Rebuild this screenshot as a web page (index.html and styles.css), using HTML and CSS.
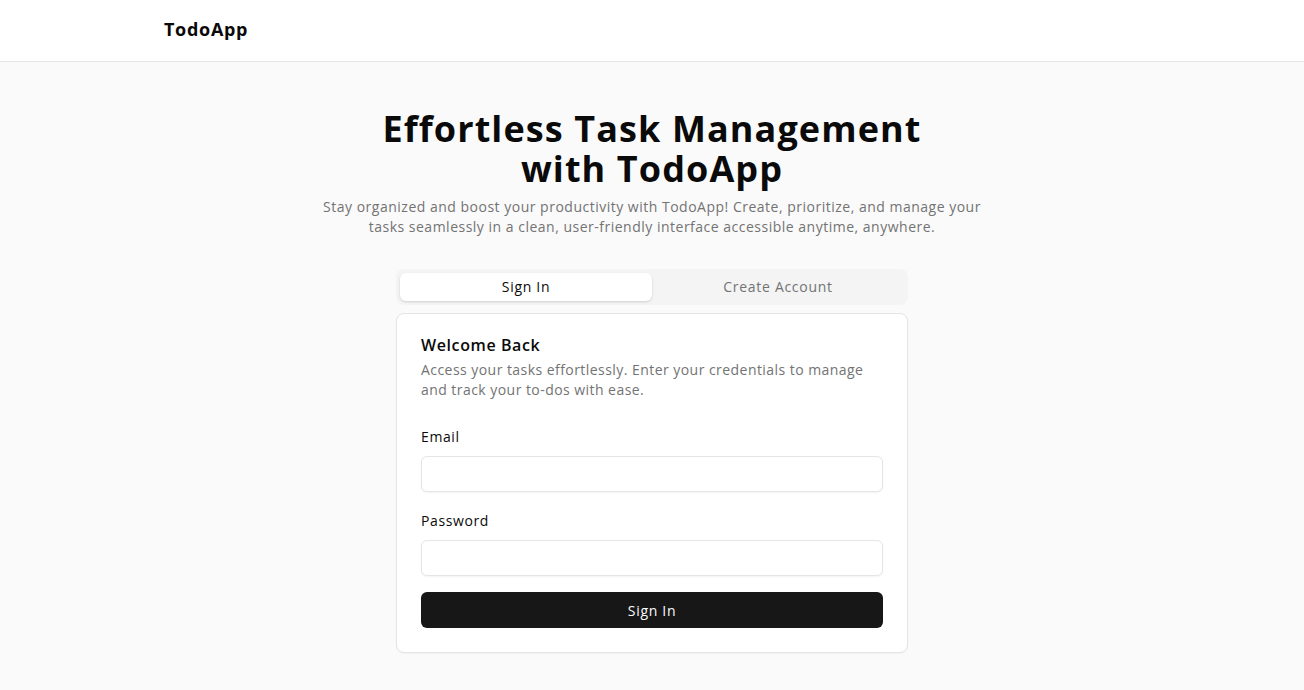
FILE: index.html
```html
<!DOCTYPE html>
<html lang="en">
<head>
<meta charset="utf-8">
<title>TodoApp</title>
<link rel="stylesheet" href="styles.css">
</head>
<body>
<header class="topbar">
  <div class="container">
    <span class="logo">TodoApp</span>
  </div>
</header>
<main class="main">
  <section class="hero">
    <h1 class="hero-title">Effortless Task Management<br>with TodoApp</h1>
    <p class="hero-sub">Stay organized and boost your productivity with TodoApp! Create, prioritize, and manage your tasks seamlessly in a clean, user-friendly interface accessible anytime, anywhere.</p>
  </section>
  <section class="auth">
    <div class="tabs">
      <button class="tab tab-active">Sign In</button>
      <button class="tab">Create Account</button>
    </div>
    <div class="card">
      <h2 class="card-title">Welcome Back</h2>
      <p class="card-desc">Access your tasks effortlessly. Enter your credentials to manage and track your to-dos with ease.</p>
      <form class="form">
        <div class="fields">
          <div class="field">
            <label class="label" for="email">Email</label>
            <input class="input" id="email" type="email">
          </div>
          <div class="field">
            <label class="label" for="password">Password</label>
            <input class="input" id="password" type="password">
          </div>
        </div>
        <button type="button" class="submit">Sign In</button>
      </form>
    </div>
  </section>
</main>
</body>
</html>
```
FILE: styles.css
```css
* { box-sizing: border-box; }
html, body { margin: 0; padding: 0; }
body {
  font-family: "Open Sans", "Liberation Sans", sans-serif;
  background: #fafafa;
  color: #0a0a0a;
  min-height: 100vh;
  letter-spacing: 0.5px;
}
.topbar {
  background: #ffffff;
  border-bottom: 1px solid #e5e5e5;
  height: 62px;
  display: flex;
  align-items: center;
}
.container {
  width: 100%;
  max-width: 1024px;
  margin: 0 auto;
  padding: 0 24px;
}
.logo {
  font-size: 18px;
  font-weight: 700;
  letter-spacing: 0.7px;
  position: relative;
  top: -2px;
}
.main {
  display: flex;
  flex-direction: column;
  align-items: center;
  padding-top: 47px;
}
.hero {
  text-align: center;
  max-width: 672px;
}
.hero-title {
  margin: 0;
  font-size: 36px;
  line-height: 40px;
  font-weight: 700;
  letter-spacing: 1.1px;
}
.hero-sub {
  margin: 8px 0 0;
  font-size: 14px;
  line-height: 20px;
  color: #737373;
  letter-spacing: 0.5px;
}
.auth {
  width: 512px;
  margin-top: 32px;
}
.tabs {
  display: grid;
  grid-template-columns: 1fr 1fr;
  background: #f4f4f4;
  border-radius: 8px;
  padding: 4px;
  height: 36px;
}
.tab {
  border: 0;
  background: transparent;
  font-family: inherit;
  font-size: 14px;
  font-weight: 500;
  color: #737373;
  border-radius: 6px;
  cursor: pointer;
  letter-spacing: 0.7px;
  padding: 0 0 1px;
}
.tab-active {
  background: #ffffff;
  color: #0a0a0a;
  box-shadow: 0 1px 3px rgba(0,0,0,0.1), 0 1px 2px rgba(0,0,0,0.06);
}
.card {
  margin-top: 8px;
  background: #ffffff;
  border: 1px solid #e5e5e5;
  border-radius: 8px;
  padding: 23px 24px 24px;
  box-shadow: 0 1px 2px rgba(0,0,0,0.04);
}
.card-title {
  margin: 0;
  font-size: 16px;
  line-height: 16px;
  font-weight: 600;
  letter-spacing: 0.6px;
}
.card-desc {
  margin: 7px 0 0;
  font-size: 14px;
  line-height: 20px;
  color: #737373;
  letter-spacing: 0.45px;
}
.form {
  margin-top: 30px;
  display: flex;
  flex-direction: column;
  gap: 16px;
}
.fields {
  display: flex;
  flex-direction: column;
  gap: 22px;
}
.field {
  display: flex;
  flex-direction: column;
  gap: 12px;
}
.label {
  font-size: 14px;
  line-height: 14px;
  font-weight: 500;
  letter-spacing: 0.6px;
}
.input {
  height: 36px;
  border: 1px solid #e5e5e5;
  border-radius: 6px;
  background: #ffffff;
  box-shadow: 0 1px 2px rgba(0,0,0,0.05);
  font-family: inherit;
  font-size: 14px;
  padding: 0 12px;
}
.submit {
  height: 36px;
  border: 0;
  border-radius: 6px;
  background: #171717;
  color: #fafafa;
  font-family: inherit;
  font-size: 14px;
  font-weight: 500;
  letter-spacing: 0.7px;
  cursor: pointer;
}
```
